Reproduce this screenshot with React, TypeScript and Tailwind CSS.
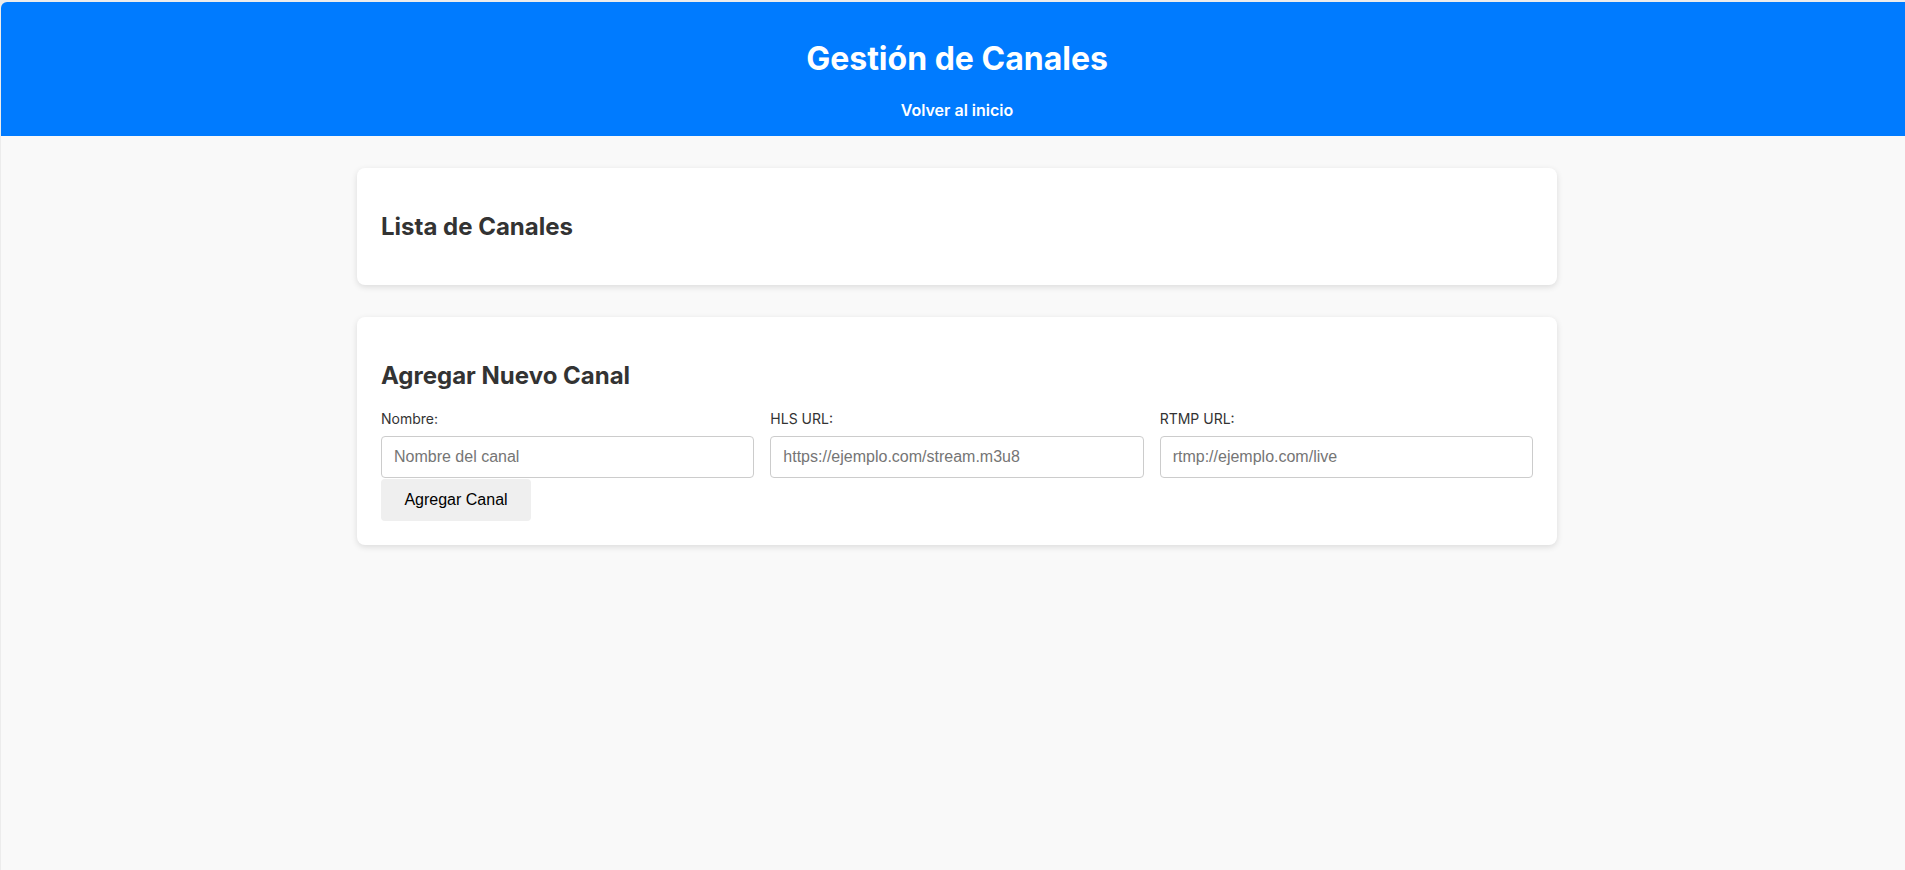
const inter = { fontFamily: "Inter, 'Noto Sans', sans-serif" };

function Field({ label, placeholder }: { label: string; placeholder: string }) {
  return (
    <div className="flex flex-col">
      <label className="text-[14px] leading-[17px] text-[#333]">{label}</label>
      <input
        type="text"
        placeholder={placeholder}
        className="mt-[9px] h-[42px] w-full rounded-[4px] border border-[#ccc] bg-white px-[12px] font-['Liberation_Sans',Arial,sans-serif] text-[16px] text-[#333] placeholder:text-[#757575] outline-none"
      />
    </div>
  );
}

export default function App() {
  return (
    <div className="min-h-screen bg-[#ececec] pl-px pt-[2px]" style={inter}>
      <div className="min-h-[868px] overflow-hidden rounded-tl-[6px] bg-[#f9f9f9]">
        {/* Top bar */}
        <header className="flex h-[134px] flex-col items-center bg-[#007bff] pl-[8px] pt-[37px] text-white">
          <h1 className="text-[32px] font-bold leading-[39px]">Gestión de Canales</h1>
          <a href="#" className="mt-[23px] text-[16px] font-semibold leading-[19px] text-white">
            Volver al inicio
          </a>
        </header>

        <main className="flex flex-col items-center gap-[32px] pl-[8px] pt-[32px]">
          {/* Channel list */}
          <section className="w-[1200px] rounded-[8px] bg-white px-[24px] py-[24px] shadow-[0_2px_6px_rgba(0,0,0,0.12)]">
            <h2 className="my-[20px] text-[24px] font-bold leading-[29px] text-[#333]">Lista de Canales</h2>
          </section>

          {/* New channel form */}
          <section className="w-[1200px] rounded-[8px] bg-white px-[24px] py-[24px] shadow-[0_2px_6px_rgba(0,0,0,0.12)]">
            <h2 className="my-[20px] text-[24px] font-bold leading-[29px] text-[#333]">Agregar Nuevo Canal</h2>
            <div className="grid grid-cols-3 gap-[16px]">
              <Field label="Nombre:" placeholder="Nombre del canal" />
              <Field label="HLS URL:" placeholder="https://ejemplo.com/stream.m3u8" />
              <Field label="RTMP URL:" placeholder="rtmp://ejemplo.com/live" />
            </div>
            <button
              type="button"
              className="mt-px h-[42px] w-[150px] rounded-[4px] bg-[#efefef] font-['Liberation_Sans',Arial,sans-serif] text-[16px] text-black"
            >
              Agregar Canal
            </button>
          </section>
        </main>
      </div>
    </div>
  );
}
